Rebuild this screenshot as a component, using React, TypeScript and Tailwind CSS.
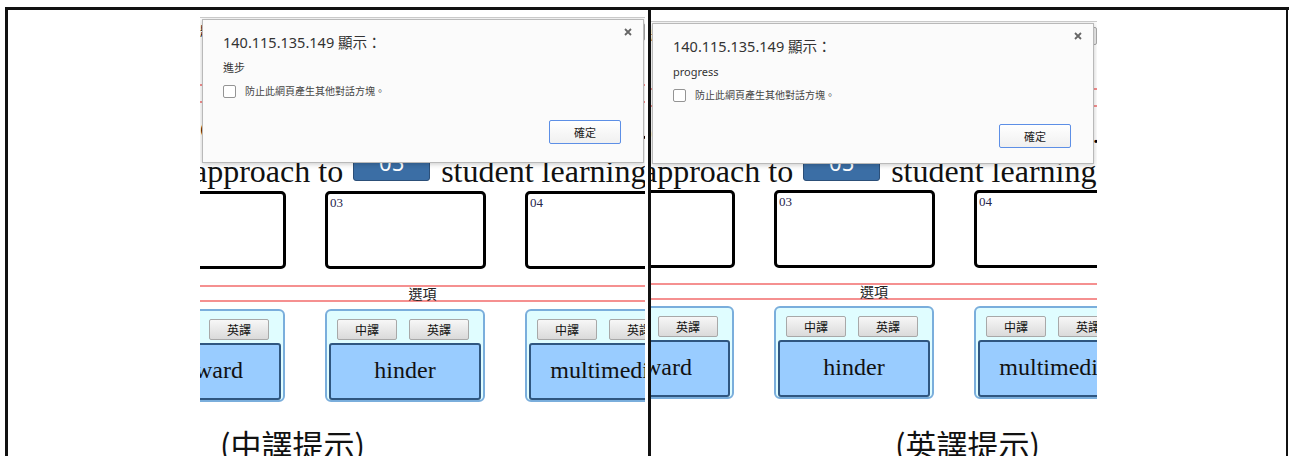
import React from "react";

const serif = "font-['Liberation_Serif','Times_New_Roman',serif]";
const sans = "font-['Noto_Sans','Noto_Sans_CJK_TC',sans-serif]";
const cjk = "font-['Noto_Sans_CJK_TC','Noto_Sans',sans-serif]";

type Side = "left" | "right";

const layout = {
  left: {
    view: "ml-[192px] mt-[7px] w-[445px] h-[403px]",
    head: "h-[132px]",
    shift: "ml-[-75px]",
    sentence: "ml-[68px]",
    boxes: "mt-[3px]",
    red: "mt-[16px]",
    cards: "mt-[7px]",
    dialog: "left-[2px] top-[1px] h-[144px]",
    caption: "ml-[212px] mt-[2px]",
  },
  right: {
    view: "ml-0 mt-[11px] w-[446px] h-[399px]",
    head: "h-[128px]",
    shift: "ml-[-77px]",
    sentence: "ml-[69px]",
    boxes: "mt-[2px]",
    red: "mt-[15px]",
    cards: "mt-[6px]",
    dialog: "left-[1px] top-[1px] h-[141px]",
    caption: "ml-[244px] mt-[2px]",
  },
};

const words = ["forward", "hinder", "multimedia"];
const labels = ["02", "03", "04"];

const TransButton = ({ text }: { text: string }) => (
  <div
    className={`${cjk} flex h-[21px] w-[60px] items-center justify-center rounded-[2px] border border-[#a8a8a8] bg-linear-to-b from-[#f7f7f7] to-[#dadada] text-[12px] leading-none text-[#111]`}
  >
    {text}
  </div>
);

const OptionCard = ({ word }: { word: string }) => (
  <div className="h-[93px] w-[160px] shrink-0 rounded-[6px] border-2 border-[#7aaedc] bg-[#e0fdff] pt-[8px]">
    <div className="flex gap-[12px] pl-[10px]">
      <TransButton text="中譯" />
      <TransButton text="英譯" />
    </div>
    <div
      className={`${serif} mx-[2px] mt-[3px] flex h-[57px] items-center justify-center whitespace-nowrap rounded-[3px] border-2 border-[#2f5680] bg-[#99ccff] pb-[3px] text-[24px] text-[#111]`}
    >
      {word}
    </div>
  </div>
);

const Dialog = ({ side, message }: { side: Side; message: string }) => (
  <div
    className={`absolute ${layout[side].dialog} w-[442px] border border-[#b9b9b9] bg-[#fbfbfb] pl-[20px] pt-[12px] shadow-[0_1px_5px_rgba(0,0,0,0.22)]`}
  >
    <svg
      className="absolute right-[11px] top-[8px]"
      width="8"
      height="8"
      viewBox="0 0 8 8"
    >
      <path d="M1 1 7 7M7 1 1 7" stroke="#666" strokeWidth="1.8" />
    </svg>
    <div className={`${sans} text-[14.5px] leading-[20px] text-[#333]`}>
      140.115.135.149 顯示：
    </div>
    <div className={`${sans} mt-[9px] text-[11px] leading-[14px] text-[#333]`}>
      {message}
    </div>
    <div className="mt-[9px] flex h-[14px] items-center gap-[9px]">
      <div className="h-[13px] w-[13px] rounded-[2px] border border-[#949494] bg-white" />
      <span className={`${cjk} text-[10px] leading-none text-[#444]`}>
        防止此網頁產生其他對話方塊。
      </span>
    </div>
    <div className="mt-[22px] flex justify-end pr-[22px]">
      <div
        className={`${cjk} flex h-[24px] w-[72px] items-center justify-center rounded-[2px] border border-[#5d8fe6] bg-linear-to-b from-white to-[#f0f0f0] text-[11px] text-[#222]`}
      >
        確定
      </div>
    </div>
  </div>
);

const Shot = ({ side, message }: { side: Side; message: string }) => {
  const l = layout[side];
  return (
    <div
      className={`relative ${l.view} overflow-hidden border-t border-[#c9c9c9] bg-white`}
    >
      {/* page content behind the alert */}
      <div className={`${l.head}`}>
        <div className="flex justify-between pt-[5px]">
          <span className={`${cjk} text-[12px] leading-[16px]`}>題目</span>
          <span className={`${cjk} rounded-[2px] border border-[#aaa] bg-[#eee] px-[8px] text-[12px] leading-[16px]`}>
            英譯
          </span>
        </div>
        <div className="mt-[43px] h-[2px] bg-[#f59090]" />
        <div className={`${cjk} h-[15px] text-center text-[13px] leading-[15px]`}>題目</div>
        <div className="h-[2px] bg-[#f59090]" />
        <div className={`${serif} mt-[12px] whitespace-nowrap text-[28px] leading-[30px]`}>
          Choose the correct word for each blank. C
        </div>
      </div>

      <div className={`${l.shift} w-[700px]`}>
        <div className={`${l.sentence} ${serif} flex h-[38px] items-start whitespace-nowrap text-[32px] leading-[38px] text-[#111]`}>
          <span className="mt-[2px]">approach to</span>
          <div className={`${sans} ml-[10px] mt-[1px] h-[30px] w-[77px] rounded-[3px] border border-[#2c4f78] bg-[#3b6ea5] text-center text-[22px] leading-[20px] text-white`}>
            05
          </div>
          <span className="ml-[11px] mt-[2px]">student learning</span>
        </div>
        <div className={`${l.boxes} flex gap-[39px]`}>
          {labels.map((t) => (
            <div
              key={t}
              className={`${serif} h-[78px] w-[161px] shrink-0 rounded-[5px] border-[3px] border-black pl-[2px] pt-[1px] text-[13px] leading-[16px] text-[#26264d]`}
            >
              {t}
            </div>
          ))}
        </div>
      </div>

      <div className={`${l.red} h-[2px] bg-[#f59090]`} />
      <div className={`${cjk} h-[13px] text-center text-[14px] leading-[13px] text-[#222]`}>
        選項
      </div>
      <div className="h-[2px] bg-[#f59090]" />

      <div className={`${l.shift} ${l.cards} flex w-[700px] gap-[40px]`}>
        {words.map((w) => (
          <OptionCard key={w} word={w} />
        ))}
      </div>

      <Dialog side={side} message={message} />
    </div>
  );
};

const Cell = ({
  side,
  message,
  caption,
  className,
}: {
  side: Side;
  message: string;
  caption: string;
  className: string;
}) => (
  <div className={className}>
    <Shot side={side} message={message} />
    <div className={`${layout[side].caption} ${cjk} whitespace-nowrap text-[31px] leading-[44px] text-[#111]`}>
      {caption}
    </div>
  </div>
);

export default function App() {
  return (
    <div className="h-[456px] w-[1289px] overflow-hidden bg-white">
      <div className="ml-[5px] mt-[7px] flex border-l-[3px] border-t-[3px] border-[#111]">
        <Cell
          side="left"
          message="進步"
          caption="(中譯提示)"
          className="h-[470px] w-[643px] shrink-0 border-r-[3px] border-[#111]"
        />
        <Cell
          side="right"
          message="progress"
          caption="(英譯提示)"
          className="h-[470px] w-[637px] shrink-0 border-r-2 border-[#111]"
        />
      </div>
    </div>
  );
}
